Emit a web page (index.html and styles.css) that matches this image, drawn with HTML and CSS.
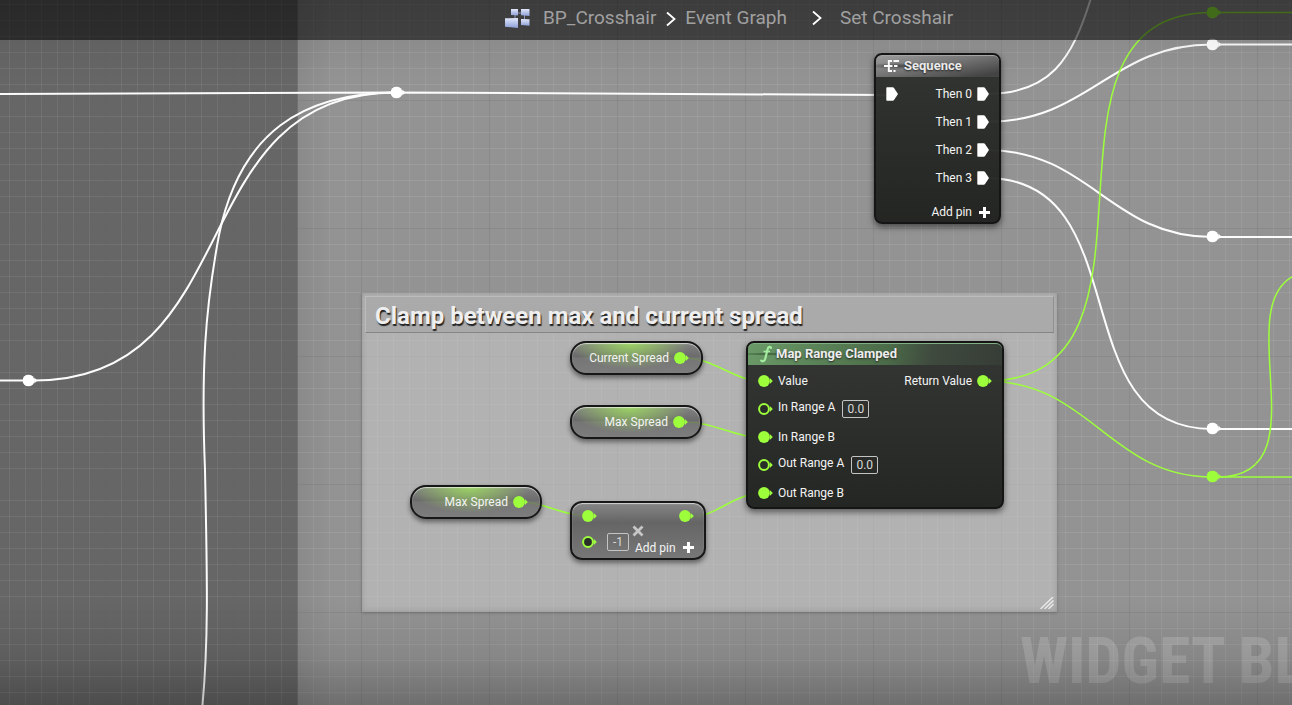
FILE: index.html
```
<!DOCTYPE html>
<html lang="en">
<head>
<meta charset="utf-8">
<title>Set Crosshair</title>
<link rel="stylesheet" href="styles.css">
</head>
<body>
<svg class="defs" aria-hidden="true">
  <symbol id="pin" viewBox="0 0 15 12"><circle cx="6" cy="6" r="5.9"/><path d="M11.8 3v6L14.8 6z"/></symbol>
  <symbol id="pin-open" viewBox="0 0 15 12"><circle cx="6" cy="6" r="4.9" fill="#2a2e28" stroke="currentColor" stroke-width="2"/><path d="M11.8 3v6L14.8 6z"/></symbol>
  <symbol id="exec" viewBox="0 0 12 14"><path d="M1 .3h5.800Q7.500.3 8 1L12 7 8 13Q7.500 13.700 6.800 13.700H1Q.3 13.700.3 13V1Q.3.3 1 .3z"/></symbol>
  <symbol id="plus" viewBox="0 0 11 11"><path d="M4 0h3v4h4v3H7v4H4V7H0V4h4z"/></symbol>
  <symbol id="chevron" viewBox="0 0 10 16"><path d="M1 1.500 8.500 8 1 14.500" fill="none" stroke="currentColor" stroke-width="1.800"/></symbol>
</svg>
<main class="graph">
  <div class="region"></div>
  <div class="grid"></div>
  <section class="comment">
    <h2 class="comment-title">Clamp between max and current spread</h2>
    <svg class="grip" viewBox="0 0 14 12"><path d="M.5 12 13 0M4.500 12 13.500 3.500M8.500 12 13.500 7" fill="none" stroke="#eee" stroke-width="1.300"/></svg>
  </section>
  <p class="watermark">WIDGET BLUEPRINT</p>
  <svg class="wires">
    <g class="exec-wires">
      <path d="M0 94 396 92.500M396 92.500 886 95"/>
      <path d="M0 380.500H34C250 380.500 180 92.500 396 92.500"/>
      <path d="M396 92.500C303 93 240 132 219 235C205 310 201 370 205 470C207 570 209 640 202 710"/>
      <path d="M986 94C1050 94 1072 60 1091-2"/>
      <path d="M986 122C1090 122 1110 44.500 1212 44.500H4000"/>
      <path d="M986 150C1090 150 1110 237 1212 237H4000"/>
      <path d="M986 178C1140 178 1060 429 1212 429H4000"/>
    </g>
    <g class="float-wires">
      <path d="M986 381C1190 381 1010 12.500 1212 12.500H4000"/>
      <path d="M986 381C1090 381 1110 477 1212 477H4000"/>
      <path d="M1218 477C1322 477 1231 312 1292 277L1330 265"/>
      <path d="M684 358C715 358 735 382 766 382"/>
      <path d="M684 422C715 422 735 438 766 438"/>
      <path d="M522 502C545 502 562 516 588 516"/>
      <path d="M688 517C720 517 730 493 766 493"/>
    </g>
    <g fill="#fff">
      <use href="#pin" x="390.5" y="86.5" width="15" height="12"/>
      <use href="#pin" x="22.5" y="374.5" width="15" height="12"/>
      <use href="#pin" x="1206.5" y="38.5" width="15" height="12"/>
      <use href="#pin" x="1206.5" y="230.5" width="15" height="12"/>
      <use href="#pin" x="1206.5" y="422.5" width="15" height="12"/>
    </g>
    <g fill="#9dff3c">
      <use href="#pin" x="1206.5" y="6.5" width="15" height="12"/>
      <use href="#pin" x="1206.5" y="470.5" width="15" height="12"/>
    </g>
  </svg>

  <article class="node sequence">
    <h3 class="node-title"><svg class="seq-icon" viewBox="0 0 15 14"><path d="M0 7H8.500M8 2H4.800V12H8M9.500 2H15M10 7H13.500M9.500 12H11.500" fill="none" stroke="#fff" stroke-width="1.900"/></svg>Sequence</h3>
    <div class="node-body">
      <svg class="exec"><use href="#exec"/></svg>
      <ul class="outputs">
        <li>Then 0<svg class="exec"><use href="#exec"/></svg></li>
        <li>Then 1<svg class="exec"><use href="#exec"/></svg></li>
        <li>Then 2<svg class="exec"><use href="#exec"/></svg></li>
        <li>Then 3<svg class="exec"><use href="#exec"/></svg></li>
      </ul>
    </div>
    <button class="add" type="button">Add pin<svg class="plus"><use href="#plus"/></svg></button>
  </article>

  <article class="node map">
    <h3 class="node-title"><svg class="fn-icon" viewBox="0 0 12 18"><path d="M11 3C10.800 1.300 8.300 1.200 7.500 4.500L5.300 13.500C4.700 16.200 2.500 17 1.200 15.600" fill="none" stroke="#a4eca0" stroke-width="2.200" stroke-linecap="round"/><path d="M3.500 6.500H10" stroke="#a4eca0" stroke-width="1.600"/></svg>Map Range Clamped</h3>
    <div class="node-body">
      <ul class="inputs">
        <li><svg class="pin"><use href="#pin"/></svg>Value</li>
        <li><svg class="pin"><use href="#pin-open"/></svg><label for="in-a">In Range A</label><input id="in-a" class="value" value="0.0"></li>
        <li><svg class="pin"><use href="#pin"/></svg>In Range B</li>
        <li><svg class="pin"><use href="#pin-open"/></svg><label for="out-a">Out Range A</label><input id="out-a" class="value" value="0.0"></li>
        <li><svg class="pin"><use href="#pin"/></svg>Out Range B</li>
      </ul>
      <ul class="outputs"><li>Return Value<svg class="pin"><use href="#pin"/></svg></li></ul>
    </div>
  </article>

  <article class="pill current">Current Spread<svg class="pin"><use href="#pin"/></svg></article>
  <article class="pill max-a">Max Spread<svg class="pin"><use href="#pin"/></svg></article>
  <article class="pill max-b">Max Spread<svg class="pin"><use href="#pin"/></svg></article>

  <article class="multiply">
    <div class="mul-row"><svg class="pin"><use href="#pin"/></svg><svg class="pin"><use href="#pin"/></svg></div>
    <div class="mul-row">
      <svg class="pin"><use href="#pin-open"/></svg>
      <input class="value" aria-label="Factor" value="-1">
      <button class="add" type="button">Add pin<svg class="plus"><use href="#plus"/></svg></button>
    </div>
    <svg class="times" viewBox="0 0 12 12"><path d="M1.500 1.500 10.500 10.500M10.500 1.500 1.500 10.500" stroke="#c6c6c6" stroke-width="2.800"/></svg>
  </article>

  <div class="vignette"></div>
  <nav class="crumbs" aria-label="Breadcrumb">
    <svg class="bp-icon" viewBox="0 0 25 19">
      <defs><linearGradient id="tile" x2="0" y2="1"><stop stop-color="#e2e8fb"/><stop offset="1" stop-color="#8d9fd8"/></linearGradient></defs>
      <path d="M12 4h6M19.500 6v5M10 6v4" stroke="#8a97b8" fill="none"/>
      <g fill="url(#tile)"><path d="M6 0h7v6.500L6 6z"/><path d="M16 0h8.500v7L16 6.300z"/><path d="M0 9.300l13-.3v10L0 17.800z"/><path d="M16 10l8.500.3v6.500L16 16z"/></g>
    </svg>
    <a href="#bp">BP_Crosshair</a><svg class="chevron"><use href="#chevron"/></svg>
    <a href="#event">Event Graph</a><svg class="chevron wide"><use href="#chevron"/></svg>
    <a href="#set">Set Crosshair</a>
  </nav>
</main>
</body>
</html>
```
FILE: styles.css
```
* { box-sizing: border-box; }
body { margin: 0; font-family: Roboto, sans-serif; font-size: 12px; line-height: 16px; color: #f4f4f4; }
h2, h3, p, ul { margin: 0; padding: 0; list-style: none; }
.defs { position: absolute; width: 0; height: 0; }
.graph { position: relative; min-height: 100vh; overflow: hidden; background: #666; }
.region { position: absolute; inset: 0 0 0 298px; background: linear-gradient(90deg, #8a8a8a, #939393 36px); }
.grid {
  position: absolute; inset: 0;
  background-image:
    linear-gradient(90deg, rgba(0,0,0,.11) 1px, transparent 1px),
    linear-gradient(rgba(0,0,0,.11) 1px, transparent 1px),
    linear-gradient(90deg, rgba(255,255,255,.07) 1px, transparent 1px),
    linear-gradient(rgba(255,255,255,.07) 1px, transparent 1px);
  background-size: 128px 128px, 128px 128px, 16px 16px, 16px 16px;
  background-position: 105px 0, 0 100px, 9px 0, 0 4px;
}
.vignette { position: absolute; inset: 0; pointer-events: none; background: linear-gradient(rgba(0,0,0,.1), transparent 80px), linear-gradient(0deg, rgba(0,0,0,.25), rgba(0,0,0,.08) 50px, transparent 105px); }
.wires { position: absolute; inset: 0; width: 100%; height: 100%; fill: none; }
.exec-wires { stroke: #fcfcfc; stroke-width: 2; }
.float-wires { stroke: #9dff3c; stroke-width: 1.500; }

.comment { position: absolute; left: 362px; top: 293px; width: 695px; height: 319px; padding: 3px; background: rgba(204,204,204,.55); box-shadow: inset 0 0 5px rgba(90,90,90,.3), 0 1px 3px rgba(0,0,0,.2); }
.comment-title { padding: 3px 9px; height: 37px; border: 1px solid #bcbcbc; border-bottom-color: #858585; border-right-color: #909090; background: #aaa; color: #efefef; font-size: 24px; line-height: 32px; text-shadow: 1px 2px 1px #222; }
.grip { position: absolute; right: 3px; bottom: 3px; width: 14px; height: 12px; }
.watermark { position: absolute; left: 1020px; top: 626px; font: bold 64px/72px "Roboto Condensed", "Liberation Sans Narrow", Roboto, sans-serif; white-space: nowrap; color: rgba(255,255,255,.18); }

.crumbs { position: absolute; inset: 0 0 auto; display: flex; align-items: center; height: 40px; padding: 0 0 4px 505px; background: rgba(0,0,0,.54); font-size: 19px; line-height: 24px; white-space: nowrap; }
.crumbs a { color: #a0a0a0; text-decoration: none; }
.bp-icon { width: 25px; height: 19px; margin-right: 13px; }
.chevron { width: 10px; height: 16px; margin: 2px 9px 0 10px; color: #fff; }
.chevron.wide { margin: 0 18px 0 25px; }

.node { position: absolute; border: 2px solid #151515; border-radius: 8px; background: linear-gradient(rgba(46,48,46,.95), rgba(32,34,31,.97)); box-shadow: 0 3px 6px rgba(0,0,0,.5); }
.sequence { left: 874px; top: 53px; width: 127px; height: 171px; }
.map { left: 746px; top: 341px; width: 258px; height: 168px; }
.node-title { display: flex; align-items: center; height: 22px; padding-bottom: 2px; border-top: 1px solid #aaa; border-radius: 6px 6px 0 0; font-size: 13px; line-height: 16px; color: #eee; text-shadow: 0 1px 2px #222; }
.sequence .node-title { gap: 5px; padding-left: 8px; background: radial-gradient(ellipse at 20px 10px, rgba(30,30,30,.6), transparent 28px), linear-gradient(170deg, #a0a0a0, #777 45%, #444 90%); }
.map .node-title { gap: 4px; padding-left: 12px; border-top-color: #81ad80; background: radial-gradient(ellipse at 20px 10px, rgba(25,45,25,.6), transparent 34px), linear-gradient(100deg, #6a9a67, #4b6b48 55%, #3f4a3e 72%, #363d36); }
.seq-icon { width: 15px; height: 14px; }
.fn-icon { width: 12px; height: 18px; }
.node-body { display: flex; justify-content: space-between; }
.node-body li { display: flex; align-items: center; height: 28px; }
.sequence .node-body { padding: 3px 10px 0; }
.sequence .outputs li { gap: 5px; }
.exec { width: 12px; height: 14px; fill: #fff; }
.sequence .node-body > .exec { margin-top: 7px; }
.pin { flex: none; width: 15px; height: 12px; fill: #9dff3c; color: #9dff3c; }
.plus { width: 11px; height: 11px; fill: #fff; }
.add { display: flex; align-items: center; gap: 7px; padding: 0; border: 0; background: none; color: inherit; font: inherit; }
.sequence .add { margin: 12px 9px 0 auto; }
.map .node-body { padding: 2px 10px 0; }
.map .inputs li { gap: 5px; }
.map .outputs li { gap: 5px; }
.map label { padding: 0 2px 4px 0; }
.value { width: 27px; height: 18px; padding: 0; border: 1px solid #c4c4c4; border-radius: 2px; background: transparent; color: #d8d8d8; font: 12px/16px Roboto, sans-serif; text-align: center; }
.pill, .multiply { position: absolute; border: 2px solid #171717; box-shadow: 0 3px 5px rgba(0,0,0,.45), inset 0 1px 1px rgba(255,255,255,.65); }
.pill { display: flex; align-items: center; justify-content: flex-end; gap: 5px; height: 34px; padding: 0 12px 0 0; border-radius: 16px; background: radial-gradient(ellipse 60px 26px at 45% 0, rgba(160,225,95,.85), transparent), linear-gradient(rgba(125,125,125,.9), rgba(95,95,95,.85) 45%, rgba(102,102,102,.8) 50%, rgba(115,115,115,.85)); }
.current { left: 570px; top: 341px; width: 133px; }
.max-a { left: 570px; top: 405px; width: 132px; }
.max-b { left: 410px; top: 485px; width: 132px; }
.multiply { left: 570px; top: 501px; width: 136px; height: 59px; padding: 6px 10px; border-radius: 12px; background: linear-gradient(rgba(130,130,130,.9), rgba(88,88,88,.85) 35%, rgba(104,104,104,.8)); }
.mul-row { display: flex; align-items: center; justify-content: space-between; height: 14px; }
.mul-row + .mul-row { justify-content: flex-start; height: 18px; margin-top: 10px; }
.multiply .value { width: 22px; margin: 0 6px 0 10px; }
.multiply .add { padding-top: 11px; }
.times { position: absolute; left: 60px; top: 22px; width: 12px; height: 12px; }
```
